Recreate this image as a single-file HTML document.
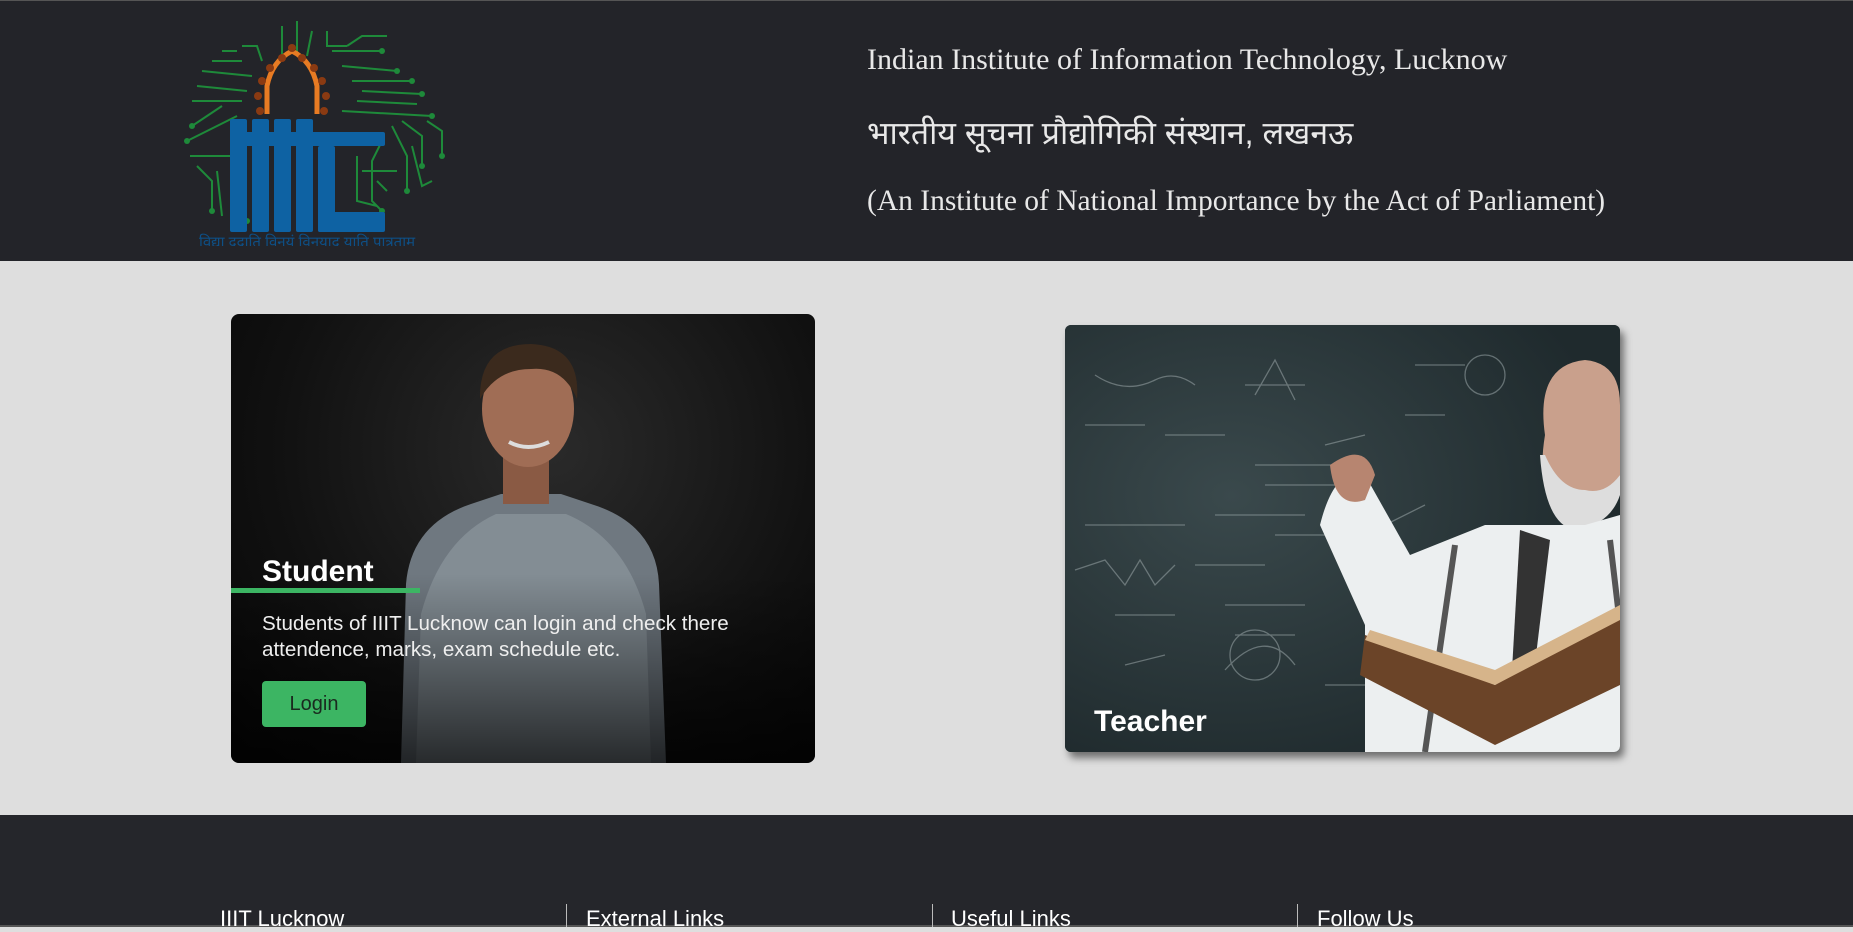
<!DOCTYPE html>
<html><head><meta charset="utf-8"><style>
*{margin:0;padding:0;box-sizing:border-box}
body{width:1853px;height:927px;overflow:hidden;background:#dedede;font-family:"Liberation Sans",sans-serif}
.hdr{position:absolute;left:0;top:0;width:1853px;height:261px;background:#232429;border-top:1px solid #555}
.t{position:absolute;left:867px;color:#e8e8e8;font-family:"Liberation Serif","Noto Serif CJK SC",serif;white-space:nowrap}
.card{position:absolute;overflow:hidden}
.ftr{position:absolute;left:0;top:815px;width:1853px;height:112px;background:#25262b}
.fh{position:absolute;top:906px;color:#fff;font-size:22px}
.sep{position:absolute;top:904px;width:1px;height:23px;background:#bbb}
</style></head><body>
<div class="hdr">
<svg style="position:absolute;left:182px;top:15px" width="270" height="230" viewBox="0 0 270 230">
<g stroke="#1e8a3a" stroke-width="2" fill="none">
<path d="M10 110 L40 90 M5 125 L55 100 M8 140 L60 140 M15 150 L30 165 L30 195 M35 155 L40 200 M50 165 L50 195 L65 205 M60 150 L60 190"/>
<path d="M10 85 L60 85 M15 70 L65 75 M20 55 L70 60 M30 45 L60 45 M40 35 L55 35 M60 30 L75 30 L80 45 M100 10 L100 40 M115 5 L115 40 M130 15 L125 40"/>
<path d="M150 35 L200 35 M160 50 L215 55 M170 65 L230 65 M180 75 L240 78 M175 85 L235 88 M160 95 L250 100 M165 30 L180 20 L205 20 M145 15 L145 30 L165 30"/>
<path d="M220 105 L240 120 L240 150 M230 130 L240 170 L250 165 M210 110 L225 140 L225 175 M200 125 L190 145 L190 185 L200 195 M175 140 L175 185 L195 190 M180 155 L215 155 M245 105 L260 115 L260 140 M195 165 L205 175"/>
</g>
<g fill="#1e8a3a"><circle cx="10" cy="110" r="3"/><circle cx="5" cy="125" r="3"/><circle cx="30" cy="195" r="3"/><circle cx="65" cy="205" r="3"/><circle cx="200" cy="35" r="3"/><circle cx="215" cy="55" r="3"/><circle cx="230" cy="65" r="3"/><circle cx="240" cy="78" r="3"/><circle cx="250" cy="100" r="3"/><circle cx="240" cy="150" r="3"/><circle cx="225" cy="175" r="3"/><circle cx="200" cy="195" r="3"/><circle cx="260" cy="140" r="3"/></g>
<path d="M85 98 L85 70 Q90 45 110 35 Q130 45 135 70 L135 98" stroke="#e87b23" stroke-width="5" fill="none"/>
<g fill="#8a3a12"><circle cx="78" cy="95" r="4"/><circle cx="76" cy="80" r="4"/><circle cx="80" cy="65" r="4"/><circle cx="88" cy="52" r="4"/><circle cx="100" cy="42" r="4"/><circle cx="110" cy="32" r="4"/><circle cx="120" cy="42" r="4"/><circle cx="132" cy="52" r="4"/><circle cx="140" cy="65" r="4"/><circle cx="144" cy="80" r="4"/><circle cx="142" cy="95" r="4"/></g>
<g fill="#0e62a3"><rect x="48" y="103" width="17" height="113" rx="2"/><rect x="70" y="103" width="17" height="113" rx="2"/><rect x="92" y="103" width="17" height="113" rx="2"/><rect x="114" y="103" width="17" height="113" rx="2"/><rect x="48" y="116" width="155" height="14" rx="2"/><rect x="136" y="130" width="17" height="86" rx="2"/><rect x="136" y="196" width="67" height="20" rx="2"/></g>
<text x="125" y="231" text-anchor="middle" fill="#0e4f85" font-size="15" font-family="'Liberation Sans','Noto Sans CJK SC',sans-serif">विद्या ददाति विनयं विनयाद् याति पात्रताम्</text>
</svg>
<div class="t" style="top:42px;font-size:30px">Indian Institute of Information Technology, Lucknow</div>
<div class="t" style="top:110px;font-size:32px;font-family:'Liberation Sans','Noto Sans CJK SC',sans-serif">भारतीय सूचना प्रौद्योगिकी संस्थान, लखनऊ</div>
<div class="t" style="top:184px;font-size:29.5px">(An Institute of National Importance by the Act of Parliament)</div>
</div>

<div class="card" style="left:231px;top:314px;width:584px;height:449px;border-radius:8px;background:radial-gradient(ellipse at 55% 30%,#2a2a2a,#111 60%,#050505)">
<svg width="584" height="449" style="position:absolute;left:0;top:0">
<defs><linearGradient id="g" x1="0" y1="0" x2="0" y2="1"><stop offset="0" stop-color="#000" stop-opacity="0"/><stop offset="1" stop-color="#000" stop-opacity=".7"/></linearGradient></defs>
<path d="M170 449 L175 270 Q180 210 240 190 L270 180 L330 180 L360 190 Q425 210 428 270 L435 449 Z" fill="#6f7880"/>
<path d="M185 449 L190 300 Q210 225 265 200 L335 200 Q395 225 415 300 L420 449 Z" fill="#8c959d" opacity=".7"/>
<rect x="272" y="130" width="46" height="60" fill="#8a5a44"/>
<ellipse cx="297" cy="95" rx="46" ry="58" fill="#a06d55"/>
<path d="M249 85 Q248 30 300 30 Q350 32 346 85 Q332 52 300 55 Q266 55 249 85Z" fill="#3b2a1d"/>
<path d="M278 128 Q297 138 318 128" stroke="#ddd" stroke-width="4" fill="none"/>
<rect x="0" y="260" width="584" height="189" fill="url(#g)"/>
</svg>
<div style="position:absolute;left:31px;top:241px;color:#fff;font-size:30px;font-weight:bold">Student</div>
<div style="position:absolute;left:0;top:274px;width:189px;height:5px;background:#3cb563"></div>
<div style="position:absolute;left:31px;top:297px;width:540px;color:#eee;font-size:20.6px;line-height:26px">Students of IIIT Lucknow can login and check there attendence, marks, exam schedule etc.</div>
<div style="position:absolute;left:31px;top:367px;width:104px;height:46px;background:#3cb563;border-radius:4px;color:#1a2a1f;font-size:20px;text-align:center;line-height:46px">Login</div>
</div>

<div class="card" style="left:1065px;top:325px;width:555px;height:427px;border-radius:6px;background:#2f3c3f;box-shadow:4px 6px 8px rgba(0,0,0,.5)">
<svg width="555" height="427" style="position:absolute;left:0;top:0">
<defs><radialGradient id="b" cx=".3" cy=".4" r=".7"><stop offset="0" stop-color="#3a494c"/><stop offset="1" stop-color="#1f2a2d"/></radialGradient></defs>
<rect width="555" height="427" fill="url(#b)"/>
<g stroke="#9aa6a8" stroke-width="1.3" fill="none" opacity=".55">
<path d="M30 50 Q60 70 90 55 Q110 45 130 60 M190 70 L210 35 L230 75 M180 60 L240 60 M20 100 L80 100 M100 110 L160 110 M190 140 L300 140 M200 160 L290 160 M20 200 L120 200 M150 190 L240 190 M10 245 L40 235 L60 260 L75 235 L90 260 L110 240 M130 240 L200 240 M160 280 L240 280 M50 290 L110 290 M170 310 L230 310 M160 345 Q200 300 230 340 M60 340 L100 330 M210 210 L260 210 M260 120 L300 110 M350 40 L400 40 M340 90 L380 90 M320 200 L360 180 M280 250 L320 240 M300 300 L340 290 M260 360 L320 360"/>
<circle cx="190" cy="330" r="25"/><circle cx="420" cy="50" r="20"/>
</g>
<path d="M480 110 Q470 40 520 35 Q555 38 555 80 L555 150 Q530 200 500 190 Q470 170 480 110Z" fill="#c9a08c"/>
<path d="M475 130 Q480 200 510 205 Q545 200 555 170 L555 150 Q540 170 520 165 Q495 165 480 130Z" fill="#ddd"/>
<path d="M300 427 L300 300 L255 200 Q270 140 300 150 L345 230 L370 220 L420 200 L520 200 L555 190 L555 427Z" fill="#eceff0"/>
<path d="M390 220 L360 427 M545 215 L555 300" stroke="#555" stroke-width="6"/>
<path d="M455 205 L485 215 L465 380 L445 380Z" fill="#333"/>
<path d="M265 140 Q300 115 310 150 L300 175 Q270 185 265 140Z" fill="#b78570"/>
<path d="M300 310 L430 360 L555 290 L555 360 L430 420 L295 350Z" fill="#6b4428"/>
<path d="M305 305 L430 345 L555 280 L555 295 L430 360 L300 315Z" fill="#d6b48a"/>
</svg>
<div style="position:absolute;left:29px;top:380px;color:#fff;font-size:30px;font-weight:bold">Teacher</div>
</div>

<div class="ftr"></div>
<div style="position:absolute;left:0;top:925px;width:1853px;height:2px;background:#555"></div>
<div class="fh" style="left:220px">IIIT Lucknow</div>
<div class="sep" style="left:566px"></div>
<div class="fh" style="left:586px">External Links</div>
<div class="sep" style="left:932px"></div>
<div class="fh" style="left:951px">Useful Links</div>
<div class="sep" style="left:1297px"></div>
<div class="fh" style="left:1317px">Follow Us</div>
</body></html>
